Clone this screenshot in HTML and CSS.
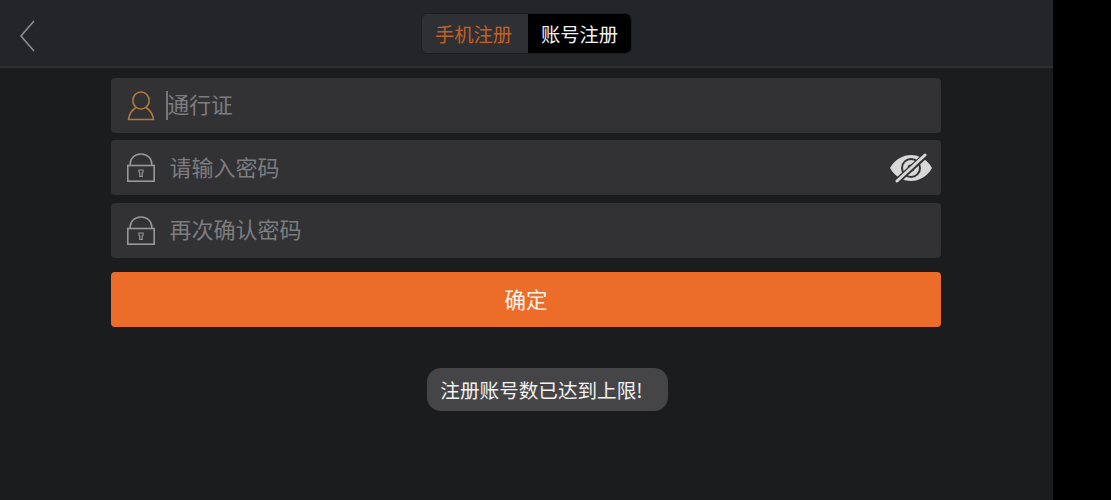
FILE: index.html
```html
<!DOCTYPE html>
<html lang="zh">
<head>
<meta charset="utf-8">
<title>账号注册</title>
<link rel="stylesheet" href="styles.css">
</head>
<body>
<div class="app">
  <header class="topbar">
    <svg class="back" width="18" height="34" viewBox="0 0 18 34"><path d="M15 2 L2 17 L15 32" fill="none" stroke="#8e8e90" stroke-width="1.6"/></svg>
    <div class="tabs">
      <div class="tab tab-off">手机注册</div>
      <div class="tab tab-on">账号注册</div>
    </div>
  </header>
  <main class="form">
    <div class="field">
      <svg class="ficon" width="28" height="30" viewBox="0 0 28 30"><g fill="none" stroke="#b07a3e" stroke-width="1.6"><ellipse cx="14" cy="9.5" rx="8.2" ry="8.5"/><path d="M9 16.5 C5 19 2 24 1.5 28.5 H26.5 C26 24 23 19 19 16.5"/></g></svg>
      <span class="caret"></span>
      <span class="ph ph-first">通行证</span>
    </div>
    <div class="field">
      <svg class="ficon" width="28" height="29" viewBox="0 0 28 29"><use href="#lock"/></svg>
      <span class="ph">请输入密码</span>
      <svg class="eye" width="42" height="30" viewBox="0 0 42 30"><path fill="#d8d8d8" d="M0 15 C3 10 6 7 9 5.5 C13 3 17 2 21 2 C25 2 29 3 33 5.5 C36 7 39 10 42 15 C39 20 36 23 33 24.5 C29 27 25 28 21 28 C17 28 13 27 9 24.5 C6 23 3 20 0 15 Z"/><circle cx="21" cy="15" r="10" fill="#333336"/><circle cx="21" cy="15" r="8" fill="#d8d8d8"/><circle cx="21" cy="15" r="3.5" fill="#333336"/><path d="M5 30 L37 1" stroke="#333336" stroke-width="6"/><path d="M7 28 L35 2" stroke="#d8d8d8" stroke-width="3" stroke-linecap="round"/></svg>
    </div>
    <div class="field">
      <svg class="ficon" width="28" height="29" viewBox="0 0 28 29"><use href="#lock"/></svg>
      <span class="ph">再次确认密码</span>
    </div>
    <button class="submit">确定</button>
    <div class="toast-row"><div class="toast">注册账号数已达到上限!</div></div>
  </main>
</div>
<svg class="defs" width="0" height="0"><defs><g id="lock" fill="none" stroke="#98989a" stroke-width="1.6"><path d="M3.2 12.5 V11 C3.2 5 8 1 14 1 C20 1 24.8 5 24.8 11 V12.5"/><rect x="0.8" y="12.5" width="26.4" height="15.7"/><path d="M12 17 H16 V19 L15.2 20 V23.5 H12.8 V20 L12 19 Z" stroke-width="1.2"/></g></defs></svg>
</body>
</html>
```
FILE: styles.css
```css
* { box-sizing: border-box; }
html, body { margin: 0; padding: 0; background: #000; }
body { width: 1111px; height: 500px; overflow: hidden; font-family: "Noto Sans CJK SC", "Liberation Sans", sans-serif; }
.app { width: 1053px; height: 500px; background: #1b1c1e; }
.topbar { height: 68px; background: #242528; border-bottom: 2px solid #2e2f31; display: flex; align-items: center; justify-content: center; position: relative; }
.back { position: absolute; left: 19px; top: 19px; }
.tabs { display: flex; width: 211px; height: 41px; margin-top: 1px; background: #2f3033; border-radius: 6px; border: 1px solid #1d1d1f; overflow: hidden; }
.tab { display: flex; align-items: center; justify-content: center; font-size: 19.3px; }
.tab-off { width: 106px; padding-right: 3px; color: #c2602a; }
.tab-on { flex: 1; background: #000; color: #f2f2f2; border-radius: 0 5px 5px 0; }
.form { width: 830px; margin-left: 111px; padding-top: 10px; display: flex; flex-direction: column; }
.field { height: 55px; background: #323235; border-radius: 4px; margin-bottom: 7.25px; display: flex; align-items: center; padding-left: 16px; position: relative; }
.ficon { flex: none; }
.ph { color: #7d7d7f; font-size: 22px; margin-left: 14.5px; white-space: nowrap; margin-top: -3.5px; }
.ph-first { margin-left: 0; font-size: 21.7px; }
.caret { width: 2px; height: 29px; background: #77777a; margin-left: 10.5px; }
.eye { position: absolute; right: 9px; top: 13px; }
.submit { height: 55px; margin-top: 7.25px; background: #ec6c2a; border: 0; border-radius: 4px; color: #fbf3ec; font: inherit; font-size: 21.5px; padding: 0 0 2px; }
.toast-row { display: flex; justify-content: center; margin-top: 41px; padding-left: 42px; }
.toast { width: 241px; height: 43px; padding-right: 11px; background: #454547; border-radius: 14px; color: #f2f2f2; font-size: 19.6px; display: flex; align-items: center; justify-content: center; white-space: nowrap; }
.defs { position: absolute; }
```
